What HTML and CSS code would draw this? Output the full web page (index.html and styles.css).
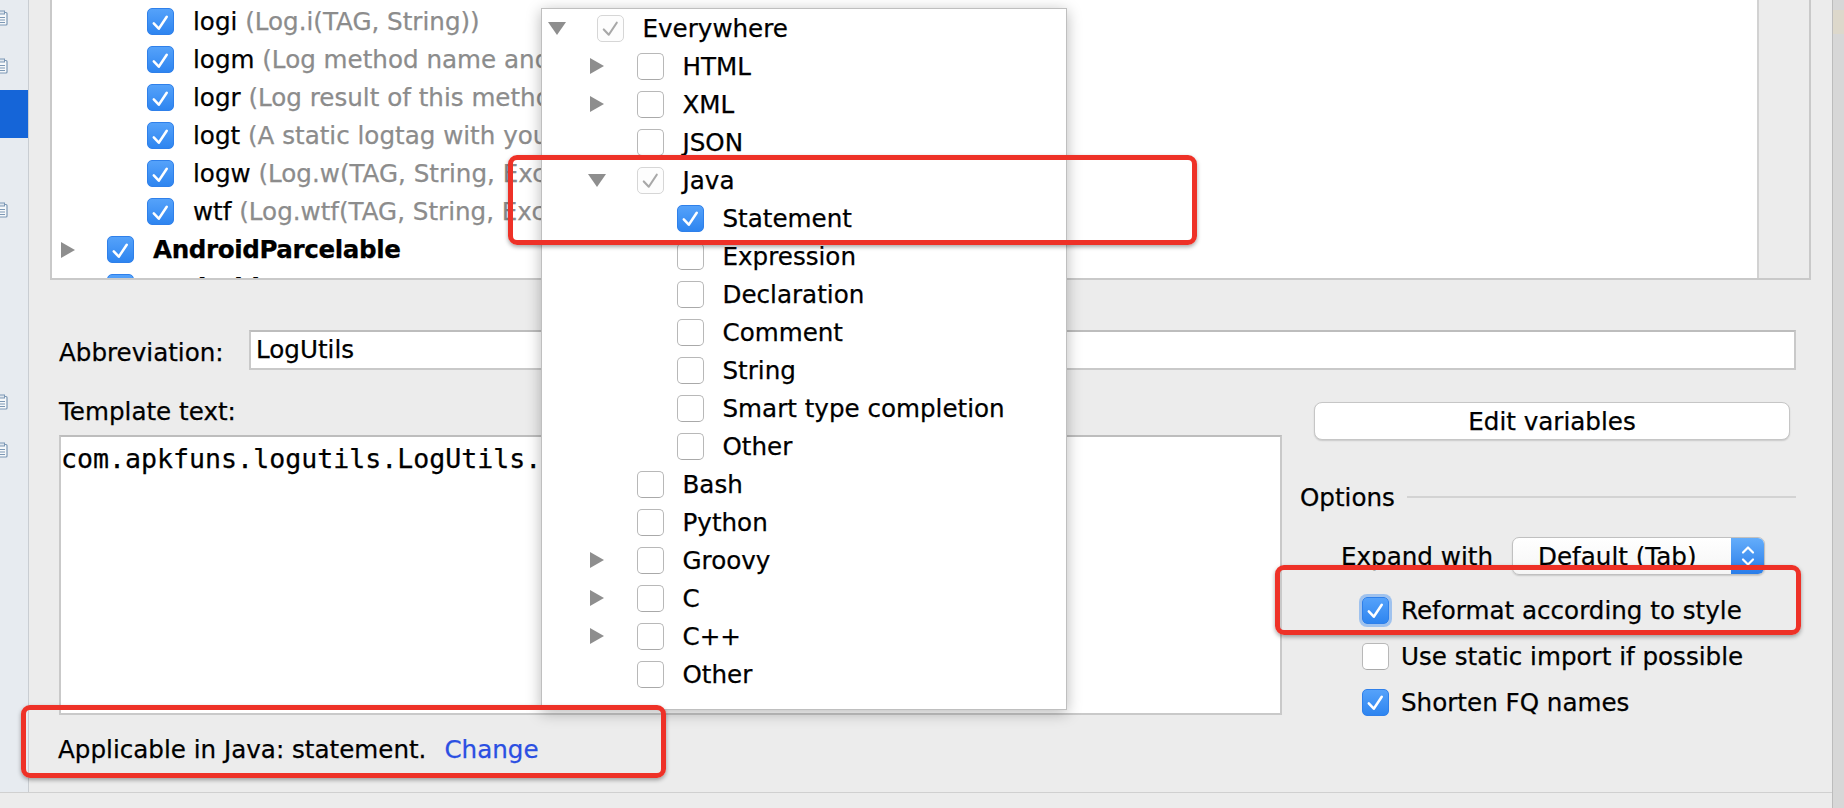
FILE: index.html
```html
<!DOCTYPE html>
<html>
<head>
<meta charset="utf-8">
<title>Live Templates</title>
<link rel="stylesheet" href="styles.css">
</head>
<body>
<div class="window">
  <div class="upper">
    <div class="sidebar">
      <div class="side-list">
        <div class="side-item"><svg class="side-icon" viewBox="0 0 12 16"><rect x="1" y="2.5" width="10" height="12.5" rx="1" class="si-body"/><rect x="3.5" y="1" width="5" height="3" class="si-tab"/><path d="M3 7.5h6M3 10h6M3 12.5h6" class="si-line"/></svg></div>
        <div class="side-item"><svg class="side-icon" viewBox="0 0 12 16"><rect x="1" y="2.5" width="10" height="12.5" rx="1" class="si-body"/><rect x="3.5" y="1" width="5" height="3" class="si-tab"/><path d="M3 7.5h6M3 10h6M3 12.5h6" class="si-line"/></svg></div>
        <div class="side-item sel"></div>
        <div class="side-item"></div>
        <div class="side-item"><svg class="side-icon" viewBox="0 0 12 16"><rect x="1" y="2.5" width="10" height="12.5" rx="1" class="si-body"/><rect x="3.5" y="1" width="5" height="3" class="si-tab"/><path d="M3 7.5h6M3 10h6M3 12.5h6" class="si-line"/></svg></div>
        <div class="side-item"></div>
        <div class="side-item"></div>
        <div class="side-item"></div>
        <div class="side-item"><svg class="side-icon" viewBox="0 0 12 16"><rect x="1" y="2.5" width="10" height="12.5" rx="1" class="si-body"/><rect x="3.5" y="1" width="5" height="3" class="si-tab"/><path d="M3 7.5h6M3 10h6M3 12.5h6" class="si-line"/></svg></div>
        <div class="side-item"><svg class="side-icon" viewBox="0 0 12 16"><rect x="1" y="2.5" width="10" height="12.5" rx="1" class="si-body"/><rect x="3.5" y="1" width="5" height="3" class="si-tab"/><path d="M3 7.5h6M3 10h6M3 12.5h6" class="si-line"/></svg></div>
      </div>
    </div>

    <div class="main">
      <div class="tree-panel">
        <div class="tree">
          <div class="row l1"><span class="tw"></span><span class="cb on"><svg class="ck" viewBox="0 0 26 26"><path d="M6 14.5L11.2 20L19.5 7.5"/></svg></span><span class="name">logi</span><span class="desc">&nbsp;(Log.i(TAG, String))</span></div>
          <div class="row l1"><span class="tw"></span><span class="cb on"><svg class="ck" viewBox="0 0 26 26"><path d="M6 14.5L11.2 20L19.5 7.5"/></svg></span><span class="name">logm</span><span class="desc">&nbsp;(Log method name and its arguments)</span></div>
          <div class="row l1"><span class="tw"></span><span class="cb on"><svg class="ck" viewBox="0 0 26 26"><path d="M6 14.5L11.2 20L19.5 7.5"/></svg></span><span class="name">logr</span><span class="desc">&nbsp;(Log result of this method)</span></div>
          <div class="row l1"><span class="tw"></span><span class="cb on"><svg class="ck" viewBox="0 0 26 26"><path d="M6 14.5L11.2 20L19.5 7.5"/></svg></span><span class="name">logt</span><span class="desc">&nbsp;(A static logtag with your current classname)</span></div>
          <div class="row l1"><span class="tw"></span><span class="cb on"><svg class="ck" viewBox="0 0 26 26"><path d="M6 14.5L11.2 20L19.5 7.5"/></svg></span><span class="name">logw</span><span class="desc">&nbsp;(Log.w(TAG, String, Exception))</span></div>
          <div class="row l1"><span class="tw"></span><span class="cb on"><svg class="ck" viewBox="0 0 26 26"><path d="M6 14.5L11.2 20L19.5 7.5"/></svg></span><span class="name">wtf</span><span class="desc">&nbsp;(Log.wtf(TAG, String, Exception))</span></div>
          <div class="row"><span class="tw"><span class="tri-r"></span></span><span class="cb on"><svg class="ck" viewBox="0 0 26 26"><path d="M6 14.5L11.2 20L19.5 7.5"/></svg></span><span class="name bold">AndroidParcelable</span></div>
          <div class="row"><span class="tw"><span class="tri-r"></span></span><span class="cb on"><svg class="ck" viewBox="0 0 26 26"><path d="M6 14.5L11.2 20L19.5 7.5"/></svg></span><span class="name bold">AndroidXML</span></div>
        </div>
        <div class="tree-side"></div>
      </div>

      <div class="abbr">
        <span class="abbr-label">Abbreviation:</span>
        <div class="field">LogUtils</div>
      </div>

      <div class="lower">
        <div class="left-col">
          <div class="tpl-label">Template text:</div>
          <div class="code">com.apkfuns.logutils.LogUtils.</div>
        </div>
        <div class="right-col">
          <div class="btn">Edit variables</div>
          <div class="options-head"><span>Options</span><span class="sep"></span></div>
          <div class="expand-row">
            <span class="expand-label">Expand with</span>
            <div class="select">
              <span class="select-text">Default (Tab)</span>
              <span class="stepper"><svg viewBox="0 0 20 30" class="chev"><path d="M5 11.5L10 6.5L15 11.5M5 18.5L10 23.5L15 18.5"/></svg></span>
            </div>
          </div>
          <div class="opt first"><span class="cb on focus"><svg class="ck" viewBox="0 0 26 26"><path d="M6 14.5L11.2 20L19.5 7.5"/></svg></span><span>Reformat according to style</span></div>
          <div class="opt"><span class="cb off"></span><span>Use static import if possible</span></div>
          <div class="opt"><span class="cb on"><svg class="ck" viewBox="0 0 26 26"><path d="M6 14.5L11.2 20L19.5 7.5"/></svg></span><span>Shorten FQ names</span></div>
        </div>
      </div>

      <div class="status">Applicable in Java: statement.<span class="link">Change</span></div>
    </div>
  </div>
  <div class="bottom-strip"></div>
</div>
<div class="edge"><div class="edge-tint"></div></div>

<div class="popup">
  <div class="prow"><span class="tw"><span class="tri-d"></span></span><span class="cb dis"><svg class="ck" viewBox="0 0 26 26"><path d="M6 14.5L11.2 20L19.5 7.5"/></svg></span><span>Everywhere</span></div>
  <div class="prow l1"><span class="tw"><span class="tri-r"></span></span><span class="cb off"></span><span>HTML</span></div>
  <div class="prow l1"><span class="tw"><span class="tri-r"></span></span><span class="cb off"></span><span>XML</span></div>
  <div class="prow l1"><span class="tw"></span><span class="cb off"></span><span>JSON</span></div>
  <div class="prow l1"><span class="tw"><span class="tri-d"></span></span><span class="cb dis"><svg class="ck" viewBox="0 0 26 26"><path d="M6 14.5L11.2 20L19.5 7.5"/></svg></span><span>Java</span></div>
  <div class="prow l2"><span class="tw"></span><span class="cb on"><svg class="ck" viewBox="0 0 26 26"><path d="M6 14.5L11.2 20L19.5 7.5"/></svg></span><span>Statement</span></div>
  <div class="prow l2"><span class="tw"></span><span class="cb off"></span><span>Expression</span></div>
  <div class="prow l2"><span class="tw"></span><span class="cb off"></span><span>Declaration</span></div>
  <div class="prow l2"><span class="tw"></span><span class="cb off"></span><span>Comment</span></div>
  <div class="prow l2"><span class="tw"></span><span class="cb off"></span><span>String</span></div>
  <div class="prow l2"><span class="tw"></span><span class="cb off"></span><span>Smart type completion</span></div>
  <div class="prow l2"><span class="tw"></span><span class="cb off"></span><span>Other</span></div>
  <div class="prow l1"><span class="tw"></span><span class="cb off"></span><span>Bash</span></div>
  <div class="prow l1"><span class="tw"></span><span class="cb off"></span><span>Python</span></div>
  <div class="prow l1"><span class="tw"><span class="tri-r"></span></span><span class="cb off"></span><span>Groovy</span></div>
  <div class="prow l1"><span class="tw"><span class="tri-r"></span></span><span class="cb off"></span><span>C</span></div>
  <div class="prow l1"><span class="tw"><span class="tri-r"></span></span><span class="cb off"></span><span>C++</span></div>
  <div class="prow l1"><span class="tw"></span><span class="cb off"></span><span>Other</span></div>
</div>

<div class="mark mark-java"></div>
<div class="mark mark-status"></div>
<div class="mark mark-reformat"></div>
</body>
</html>
```

FILE: styles.css
```css
* { box-sizing: border-box; }
html, body { margin: 0; padding: 0; }
body {
  width: 1844px;
  height: 808px;
  overflow: hidden;
  position: relative;
  display: flex;
  background: #ececec;
  font-family: "DejaVu Sans", "Noto Sans", sans-serif;
  font-size: 24.6px;
  color: #000;
  -webkit-text-stroke: 0.25px currentColor;
}

.window { width: 1832px; display: flex; flex-direction: column; }
.upper { height: 792px; display: flex; }

/* sidebar */
.sidebar {
  width: 29px;
  flex: none;
  background: #e7ebf0;
  border-right: 1.5px solid #c9cdd2;
  overflow: hidden;
}
.side-list { margin-top: -6px; display: flex; flex-direction: column; }
.side-item { height: 48px; display: flex; align-items: center; }
.side-item.sel { background: #1565d8; }
.side-icon { width: 12px; height: 16px; margin-left: -4px; flex: none; }
.si-body { fill: #f6f8fa; stroke: #7d98b5; stroke-width: 1.2; }
.si-tab { fill: #dfe6ee; stroke: #7d98b5; stroke-width: 1; }
.si-line { stroke: #7d98b5; stroke-width: 1; fill: none; }

/* main */
.main {
  flex: 1;
  padding: 0 21px;
  display: flex;
  flex-direction: column;
}

.tree-panel {
  height: 280px;
  flex: none;
  display: flex;
  background: #fff;
  border: 2px solid #c9c9c9;
  border-top: none;
}
.tree { flex: 1; overflow: hidden; padding-top: 2.5px; padding-left: 7px; }
.tree-side { width: 52px; background: #ececec; border-left: 2px solid #d2d2d2; }

.row, .prow {
  height: 38px;
  display: flex;
  align-items: center;
  white-space: nowrap;
}
.row.l1, .prow.l1 { padding-left: 40px; }
.prow.l2 { padding-left: 80px; }

.tw {
  width: 17px;
  height: 20px;
  margin-right: 31px;
  flex: none;
  display: flex;
  align-items: center;
  justify-content: center;
}
.tri-r {
  width: 0; height: 0;
  border-left: 14px solid #8e8e8e;
  border-top: 8.5px solid transparent;
  border-bottom: 8.5px solid transparent;
}
.tri-d {
  width: 0; height: 0;
  border-top: 13px solid #8e8e8e;
  border-left: 9px solid transparent;
  border-right: 9px solid transparent;
}

.cb {
  width: 27px;
  height: 27px;
  border-radius: 5px;
  margin-right: 19px;
  flex: none;
  display: flex;
  align-items: center;
  justify-content: center;
}
.cb.on {
  background: linear-gradient(#55a2fa, #2e85f0);
  border: 1px solid #2f80ea;
}
.cb.off {
  background: #fff;
  border: 1.5px solid #b8b8b8;
  border-bottom-color: #a9a9a9;
}
.cb.dis {
  background: #fdfdfd;
  border: 1.5px solid #d6d6d6;
}
.ck { width: 26px; height: 26px; }
.ck path { fill: none; stroke: #fff; stroke-width: 2.6; stroke-linecap: round; stroke-linejoin: round; }
.cb.dis .ck path { stroke: #a8a8a8; stroke-width: 2.2; }
.cb.focus { box-shadow: 0 0 0 3px rgba(96, 160, 240, 0.55); }

.name { color: #000; }
.name.bold { font-weight: bold; letter-spacing: -0.4px; }
.desc { color: #8c8c8c; }

/* abbreviation */
.abbr {
  margin-top: 50px;
  height: 40px;
  display: flex;
  align-items: center;
  padding: 0 15px 0 9px;
}
.abbr-label { width: 190px; flex: none; padding-top: 4px; }
.field {
  flex: 1;
  height: 40px;
  line-height: 36px;
  background: #fff;
  border: 2px solid #c9c9c9;
  border-top-color: #bdbdbd;
  padding-left: 5px;
  color: #000;
}

/* lower */
.lower { display: flex; padding: 0 15px 0 9px; gap: 18px; }
.left-col { width: 1223px; flex: none; }
.tpl-label { margin-top: 27px; line-height: 30px; height: 30px; }
.code {
  margin-top: 8px;
  height: 280px;
  background: #fff;
  border: 2px solid #c9c9c9;
  border-top-color: #bdbdbd;
  font-family: "DejaVu Sans Mono", "Liberation Mono", monospace;
  font-size: 26.6px;
  line-height: 36px;
  padding: 4px 0 0 0;
  color: #000;
  white-space: nowrap;
}

.right-col { flex: 1; padding-top: 32px; display: flex; flex-direction: column; }
.btn {
  height: 38px;
  margin: 0 6px 0 14px;
  background: #fff;
  border: 1px solid #c6c6c6;
  border-radius: 8px;
  box-shadow: 0 1px 1.5px rgba(0, 0, 0, 0.15);
  display: flex;
  align-items: center;
  justify-content: center;
  color: #000;
}
.options-head {
  margin-top: 42px;
  height: 30px;
  display: flex;
  align-items: center;
}
.sep { flex: 1; height: 2px; background: #d3d3d3; margin-left: 12px; }

.expand-row {
  margin-top: 25px;
  height: 38px;
  display: flex;
  align-items: center;
  padding-left: 41px;
}
.expand-label { width: 171px; flex: none; }
.select {
  width: 253px;
  height: 38px;
  border: 1px solid #c0c0c0;
  border-radius: 7px;
  background: linear-gradient(#ffffff, #f5f5f5);
  box-shadow: 0 1px 1.5px rgba(0, 0, 0, 0.15);
  display: flex;
  align-items: center;
  overflow: hidden;
}
.select-text { flex: 1; padding-left: 25px; color: #000; }
.stepper {
  width: 33px;
  align-self: stretch;
  background: linear-gradient(#64adfb, #2a7de9);
  display: flex;
  align-items: center;
  justify-content: center;
}
.chev { width: 20px; height: 30px; }
.chev path { fill: none; stroke: #fff; stroke-width: 2.2; stroke-linecap: round; stroke-linejoin: round; }

.opt {
  height: 30px;
  margin-top: 16px;
  display: flex;
  align-items: center;
  padding-left: 62px;
  color: #000;
}
.opt.first { margin-top: 20px; }
.opt .cb { margin-right: 12px; }

.status {
  margin-top: auto;
  margin-bottom: 27px;
  height: 30px;
  line-height: 30px;
  padding-left: 8px;
  color: #000;
}
.link { color: #2b4fe2; margin-left: 18px; }

.bottom-strip { height: 16px; background: #ececec; border-top: 1.5px solid #d0d0d0; }

.edge {
  width: 12px;
  flex: none;
  background: #d7d7d7;
  border-left: 1.5px solid #bcbcbc;
  padding-top: 10px;
}
.edge-tint { height: 24px; background: #ddd8cb; }

/* popup */
.popup {
  position: absolute;
  left: 541px;
  top: 8px;
  width: 526px;
  height: 702px;
  background: #fff;
  border: 1.5px solid #bfbfbf;
  box-shadow: 0 3px 14px rgba(0, 0, 0, 0.28);
  padding: 0 0 0 6.5px;
  color: #000;
}

/* annotation marks */
.mark {
  position: absolute;
  border: 5px solid #ee3127;
  border-radius: 9px;
  box-shadow: 0 2px 4px rgba(0, 0, 0, 0.35);
}
.mark-java { left: 508px; top: 155px; width: 689px; height: 90px; }
.mark-status { left: 21px; top: 705px; width: 645px; height: 73px; }
.mark-reformat { left: 1275px; top: 565px; width: 526px; height: 70px; }
```
